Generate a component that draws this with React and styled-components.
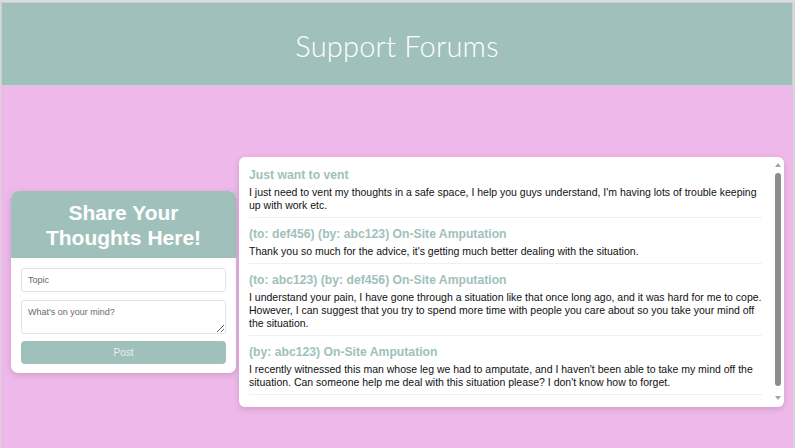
import React from "react";
import styled, { createGlobalStyle } from "styled-components";

const Global = createGlobalStyle`
  html, body { margin: 0; padding: 0; }
  body {
    background: #efb8ea;
    font-family: "Liberation Sans", Arial, sans-serif;
    overflow: hidden;
  }
  * { box-sizing: border-box; }
`;

const Page = styled.div`
  min-height: 448px;
  border-left: 1px solid #d6d6d6;
  border-right: 2px solid #d6d6d6;
  border-top: 2px solid #dcdcdc;
  background: #efb8ea;
`;

const Header = styled.header`
  height: 84px;
  background: #a0c1bb;
  border: 1px solid #c9d3d1;
  display: flex;
  align-items: center;
  justify-content: center;
`;

const Title = styled.h1`
  margin: 0;
  font-family: "Lato", "Noto Sans", sans-serif;
  font-weight: 300;
  font-size: 29px;
  color: #ffffff;
  letter-spacing: 0.2px;
  padding-top: 3px;
`;

const Main = styled.main`
  display: flex;
  align-items: center;
  gap: 3px;
  padding: 71px 9px 0 10px;
`;

const Card = styled.section`
  width: 225px;
  flex-shrink: 0;
  background: #fff;
  border-radius: 7px;
  box-shadow: 0 2px 6px rgba(0, 0, 0, 0.15);
  overflow: hidden;
`;

const CardHead = styled.div`
  background: #a0c1bb;
  padding: 9px 8px 8px;
  text-align: center;
  color: #fff;
  font-weight: 700;
  font-size: 21px;
  line-height: 25px;
`;

const CardBody = styled.form`
  padding: 10px 10px 9px;
  display: flex;
  flex-direction: column;
  gap: 8px;
`;

const Field = styled.input`
  height: 24px;
  width: 100%;
  border: 1px solid #e4e4e4;
  border-radius: 3px;
  padding: 0 6px;
  font-family: "Liberation Sans", Arial, sans-serif;
  font-size: 9px;
  outline: none;
  &::placeholder { color: #6a6a6a; }
`;

const Area = styled.textarea`
  height: 34px;
  width: 100%;
  border: 1px solid #e4e4e4;
  border-radius: 3px;
  padding: 6px 6px;
  font-family: "Liberation Sans", Arial, sans-serif;
  font-size: 9px;
  resize: vertical;
  outline: none;
  &::placeholder { color: #6a6a6a; }
`;

const Button = styled.button`
  height: 23px;
  margin-top: -1px;
  width: 100%;
  border: none;
  border-radius: 4px;
  background: #a0c1bb;
  color: #e6efed;
  font-family: "Liberation Sans", Arial, sans-serif;
  font-size: 10px;
`;

const Panel = styled.section`
  flex: 1;
  height: 250px;
  background: #fff;
  border-radius: 6px;
  box-shadow: 0 2px 6px rgba(0, 0, 0, 0.15);
  overflow: hidden;
  display: flex;
`;

const Feed = styled.div`
  flex: 1;
  min-width: 0;
  overflow: hidden;
  padding: 11px 10px 0 10px;
`;

const Scrollbar = styled.div`
  width: 12px;
  flex-shrink: 0;
  display: flex;
  flex-direction: column;
  align-items: center;
  padding: 3px 0 4px;
`;

const Arrow = styled.div`
  width: 0;
  height: 0;
  border-left: 3px solid transparent;
  border-right: 3px solid transparent;
  ${(p) =>
    p.$down
      ? "border-top: 4px solid #a3a3a3;"
      : "border-bottom: 4px solid #a3a3a3;"}
  margin: 3px 0;
`;

const Thumb = styled.div`
  flex: 1;
  width: 6px;
  margin: 3px 0 7px;
  border-radius: 3px;
  background: #8c8c8c;
`;

const Post = styled.article`
  padding-bottom: 5px;
  margin-bottom: 9px;
  border-bottom: 1px solid #f0f0f0;
`;

const PostTitle = styled.h3`
  margin: 0 0 3px;
  color: #a0c1bb;
  font-weight: 700;
  font-size: 12.2px;
  line-height: 15px;
`;

const PostText = styled.p`
  margin: 0;
  color: #111;
  font-size: 10.5px;
  line-height: 13px;
`;

const posts = [
  {
    title: "Just want to vent",
    text: "I just need to vent my thoughts in a safe space, I help you guys understand, I'm having lots of trouble keeping up with work etc.",
  },
  {
    title: "(to: def456) (by: abc123) On-Site Amputation",
    text: "Thank you so much for the advice, it's getting much better dealing with the situation.",
  },
  {
    title: "(to: abc123) (by: def456) On-Site Amputation",
    text: "I understand your pain, I have gone through a situation like that once long ago, and it was hard for me to cope. However, I can suggest that you try to spend more time with people you care about so you take your mind off the situation.",
  },
  {
    title: "(by: abc123) On-Site Amputation",
    text: "I recently witnessed this man whose leg we had to amputate, and I haven't been able to take my mind off the situation. Can someone help me deal with this situation please? I don't know how to forget.",
  },
];

export default function App() {
  return (
    <>
      <Global />
      <Page>
        <Header>
          <Title>Support Forums</Title>
        </Header>
        <Main>
          <Card>
            <CardHead>
              Share Your
              <br />
              Thoughts Here!
            </CardHead>
            <CardBody onSubmit={(e) => e.preventDefault()}>
              <Field placeholder="Topic" />
              <Area placeholder="What's on your mind?" />
              <Button type="submit">Post</Button>
            </CardBody>
          </Card>
          <Panel>
            <Feed>
              {posts.map((p) => (
                <Post key={p.title}>
                  <PostTitle>{p.title}</PostTitle>
                  <PostText>{p.text}</PostText>
                </Post>
              ))}
            </Feed>
            <Scrollbar aria-hidden="true">
              <Arrow />
              <Thumb />
              <Arrow $down />
            </Scrollbar>
          </Panel>
        </Main>
      </Page>
    </>
  );
}
